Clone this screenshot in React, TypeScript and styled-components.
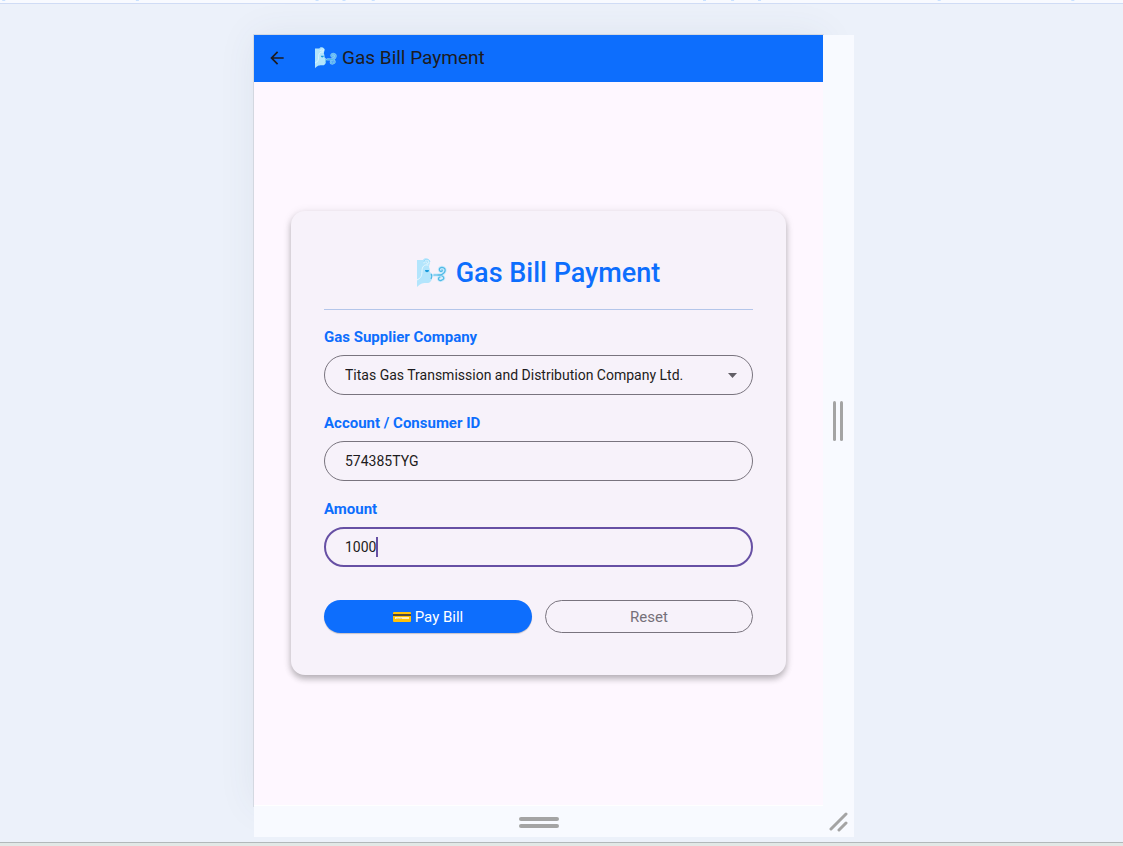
import React, { useState } from 'react';
import styled, { createGlobalStyle } from 'styled-components';

const BLUE = '#0d6efd';
const INK = '#1d1b20';
const OUTLINE = '#79747e';
const PURPLE = '#6750a4';
const FONT = "Roboto, 'Liberation Sans', sans-serif";

const GlobalStyle = createGlobalStyle`
  *, *::before, *::after { box-sizing: border-box; }
  body { margin: 0; background: #ecf1fa; font-family: ${FONT}; }
`;

const Page = styled.div`
  display: flex;
  flex-direction: column;
  min-height: 100vh;
`;

const TopStrip = styled.div`
  height: 4px;
  background: #f8faff;
  border-bottom: 1px solid #d0dcf5;
`;

const Ticks = styled.svg`
  display: block;
  width: 100%;
  height: 1px;
`;

const Stage = styled.main`
  flex: 1;
  display: flex;
  justify-content: center;
  padding: 31px 15px 5px 0;
`;

const BottomStrip = styled.div`
  height: 4px;
  background: #e2e8e6;
  border-top: 1px solid #b2b8ba;
`;

const Device = styled.div`
  width: 100%;
  max-width: 600px;
  display: grid;
  grid-template-columns: minmax(0, 1fr) 31px;
  grid-template-rows: 1fr 31px;
`;

const Screen = styled.section`
  display: flex;
  flex-direction: column;
  background: #fef7ff;
  border-bottom: 1px solid #ffffff;
  box-shadow: 0 0 0 1px rgba(0, 0, 0, 0.08), 0 0 36px rgba(60, 80, 100, 0.08);
`;

const Handle = styled.div<{ $vertical?: boolean }>`
  position: relative;
  display: flex;
  flex-direction: ${(p) => (p.$vertical ? 'row' : 'column')};
  align-items: center;
  justify-content: center;
  gap: ${(p) => (p.$vertical ? 4 : 3)}px;
  padding: ${(p) => (p.$vertical ? '0 1px 0 0' : '2px 0 0')};
  background: #f8faff;
`;

const Grip = styled.span<{ $vertical?: boolean }>`
  width: ${(p) => (p.$vertical ? 3 : 40)}px;
  height: ${(p) => (p.$vertical ? 40 : 4)}px;
  border-radius: 2px;
  background: #a4a4a4;
`;

const AppBar = styled.header`
  display: flex;
  align-items: center;
  gap: 24px;
  height: 47px;
  padding: 0 13px 2px;
  background: ${BLUE};
  color: ${INK};
`;

const BackButton = styled.button`
  display: flex;
  padding: 0;
  border: 0;
  background: none;
  color: inherit;
`;

const BarTitle = styled.div`
  display: flex;
  align-items: center;
  gap: 5px;
  padding-left: 4px;
  font-size: 19px;
  line-height: 24px;
`;

const Body = styled.div`
  flex: 1;
  display: flex;
  align-items: center;
  padding: 24px 37px 25px;
`;

const Card = styled.form`
  width: 100%;
  padding: 44px 33px 42px;
  border-radius: 14px;
  background: #f7f2fa;
  box-shadow: 0 4px 6px rgba(0, 0, 0, 0.24), 0 1px 10px rgba(0, 0, 0, 0.1);
`;

const Heading = styled.h1`
  display: flex;
  align-items: center;
  justify-content: center;
  gap: 9px;
  margin: 0 0 18px;
  color: ${BLUE};
  font-size: 27px;
  font-weight: 500;
  line-height: 36px;
`;

const Divider = styled.hr`
  height: 1px;
  margin: 0 0 17px;
  border: 0;
  background: #b4c6ea;
`;

const Fields = styled.div`
  display: grid;
  gap: 18px;
`;

const Field = styled.div`
  display: grid;
  gap: 8px;
`;

const Label = styled.label`
  color: ${BLUE};
  font-size: 15px;
  font-weight: 700;
  line-height: 20px;
`;

const Control = styled.div`
  position: relative;
  display: flex;
`;

const controlStyle = `
  width: 100%;
  height: 40px;
  margin: 0;
  border-radius: 20px;
  background: transparent;
  color: ${INK};
  font-family: ${FONT};
  font-size: 14px;
  line-height: 20px;
  outline: none;
`;

const TextInput = styled.input<{ $active?: boolean }>`
  ${controlStyle}
  border: ${(p) => (p.$active ? `2px solid ${PURPLE}` : `1px solid ${OUTLINE}`)};
  padding: 0 ${(p) => (p.$active ? 19 : 20)}px;
`;

const Select = styled.select`
  ${controlStyle}
  appearance: none;
  padding: 0 40px 0 20px;
  border: 1px solid ${OUTLINE};
`;

const Arrow = styled.svg`
  position: absolute;
  top: 18px;
  right: 16px;
  pointer-events: none;
`;

const Caret = styled.span`
  position: absolute;
  top: 10px;
  left: 52px;
  width: 2px;
  height: 20px;
  background: ${PURPLE};
`;

const Actions = styled.div`
  display: grid;
  grid-template-columns: 1fr 1fr;
  gap: 13px;
  margin-top: 33px;
`;

const Button = styled.button<{ $primary?: boolean }>`
  display: flex;
  align-items: center;
  justify-content: center;
  gap: 4px;
  height: 33px;
  padding: 0 16px;
  border: ${(p) => (p.$primary ? '0' : `1px solid ${OUTLINE}`)};
  border-radius: 17px;
  background: ${(p) => (p.$primary ? BLUE : 'transparent')};
  box-shadow: ${(p) => (p.$primary ? '0 1px 1px rgba(0, 0, 0, 0.2)' : 'none')};
  color: ${(p) => (p.$primary ? '#ffffff' : '#757079')};
  font-family: ${FONT};
  font-size: 15px;
  line-height: 20px;
`;

function WindFace({ size }: { size: number }) {
  return (
    <svg width={size} height={size} viewBox="0 0 30 30" fill="none" aria-hidden="true">
      <path d="M0 2H6C7 -1 13 0 13 4C13 6 12 7 12 9C13 11 13 13 13 14L16 17C15 18 15 18 15 19C15 23 13 25 10 25C6 25 4 25 0 29Z" fill="#b3e5fc" />
      <path d="M7 5C7 1 12 1 12 4C12 6 9 6 9 4M11 7C7 6 5 9 5 13C5 18 4 20 0 22" stroke="#e9f9ff" strokeWidth="1" strokeLinecap="round" />
      <path d="M7 4C7 1 12 0 13 4" stroke="#81d4fa" strokeWidth=".7" />
      <path d="M8 12C8 15 12 15 12 12Z" fill="#1a9bdc" />
      <path d="M14 16C15 17 15 19 14 21" stroke="#4fb7e5" strokeWidth="1.2" />
      <path d="M17 17H20C27 18 30 12 27 10C24 8 21 11 23 13C24 14 26 13 25 12M20 17C26 16 29 21 25 22C22 24 20 20 23 19" stroke="#b3e5fc" strokeWidth="3" strokeLinecap="round" opacity=".7" />
      <path d="M17 17H20C27 18 30 12 27 10C24 8 21 11 23 13C24 14 26 13 25 12M20 17C26 16 29 21 25 22C22 24 20 20 23 19" stroke="#4fb9e5" strokeWidth="1.2" strokeLinecap="round" />
    </svg>
  );
}

function CreditCard() {
  return (
    <svg width="18" height="12" viewBox="0 0 18 12" aria-hidden="true">
      <rect y="1" width="18" height="10" rx="1" fill="#ffc107" />
      <path d="M0 3H18V5H0Z" fill="#504b40" />
      <rect x="2" y="6" width="14" height="2" fill="#fff0bd" />
      <path d="M3 8L5 7L6 8L8 7L9 8" stroke="#b9a66a" strokeWidth=".5" fill="none" />
    </svg>
  );
}

const tickPositions = ['0.2%', '12.1%', '28.1%', '30.5%', '33.1%', '62.6%', '65.1%', '67.5%', '83.5%', '95.4%'];

export default function App() {
  const [account, setAccount] = useState('574385TYG');
  const [amount, setAmount] = useState('1000');

  return (
    <Page>
      <GlobalStyle />
      <TopStrip>
        <Ticks aria-hidden="true">
          {tickPositions.map((x) => (
            <rect key={x} x={x} width="3" height="1" fill="#c9e1ff" />
          ))}
        </Ticks>
      </TopStrip>
      <Stage>
        <Device>
          <Screen>
            <AppBar>
              <BackButton type="button" aria-label="Back">
                <svg width="20" height="20" viewBox="0 0 24 24" aria-hidden="true">
                  <path d="M20 11H7.83l5.59-5.59L12 4l-8 8 8 8 1.41-1.41L7.83 13H20z" fill="currentColor" />
                </svg>
              </BackButton>
              <BarTitle>
                <WindFace size={22} />
                Gas Bill Payment
              </BarTitle>
            </AppBar>
            <Body>
              <Card onSubmit={(e) => e.preventDefault()}>
                <Heading>
                  <WindFace size={30} />
                  Gas Bill Payment
                </Heading>
                <Divider />
                <Fields>
                  <Field>
                    <Label htmlFor="supplier">Gas Supplier Company</Label>
                    <Control>
                      <Select id="supplier" defaultValue="titas">
                        <option value="titas">Titas Gas Transmission and Distribution Company Ltd.</option>
                      </Select>
                      <Arrow width="9" height="5" viewBox="0 0 9 5" aria-hidden="true">
                        <path d="M0 0H9L4.5 5Z" fill="#625f66" />
                      </Arrow>
                    </Control>
                  </Field>
                  <Field>
                    <Label htmlFor="account">Account / Consumer ID</Label>
                    <Control>
                      <TextInput id="account" value={account} onChange={(e) => setAccount(e.target.value)} />
                    </Control>
                  </Field>
                  <Field>
                    <Label htmlFor="amount">Amount</Label>
                    <Control>
                      <TextInput id="amount" $active value={amount} onChange={(e) => setAmount(e.target.value)} />
                      <Caret />
                    </Control>
                  </Field>
                </Fields>
                <Actions>
                  <Button type="submit" $primary>
                    <CreditCard />
                    Pay Bill
                  </Button>
                  <Button type="button" onClick={() => { setAccount(''); setAmount(''); }}>Reset</Button>
                </Actions>
              </Card>
            </Body>
          </Screen>
          <Handle $vertical>
            <Grip $vertical />
            <Grip $vertical />
          </Handle>
          <Handle>
            <Grip />
            <Grip />
          </Handle>
          <Handle $vertical>
            <svg width="20" height="20" viewBox="0 0 20 20" aria-hidden="true">
              <path d="M3 17L18 2M11 18L18 11" stroke="#a4a4a4" strokeWidth="3" strokeLinecap="round" />
            </svg>
          </Handle>
        </Device>
      </Stage>
      <BottomStrip />
    </Page>
  );
}
